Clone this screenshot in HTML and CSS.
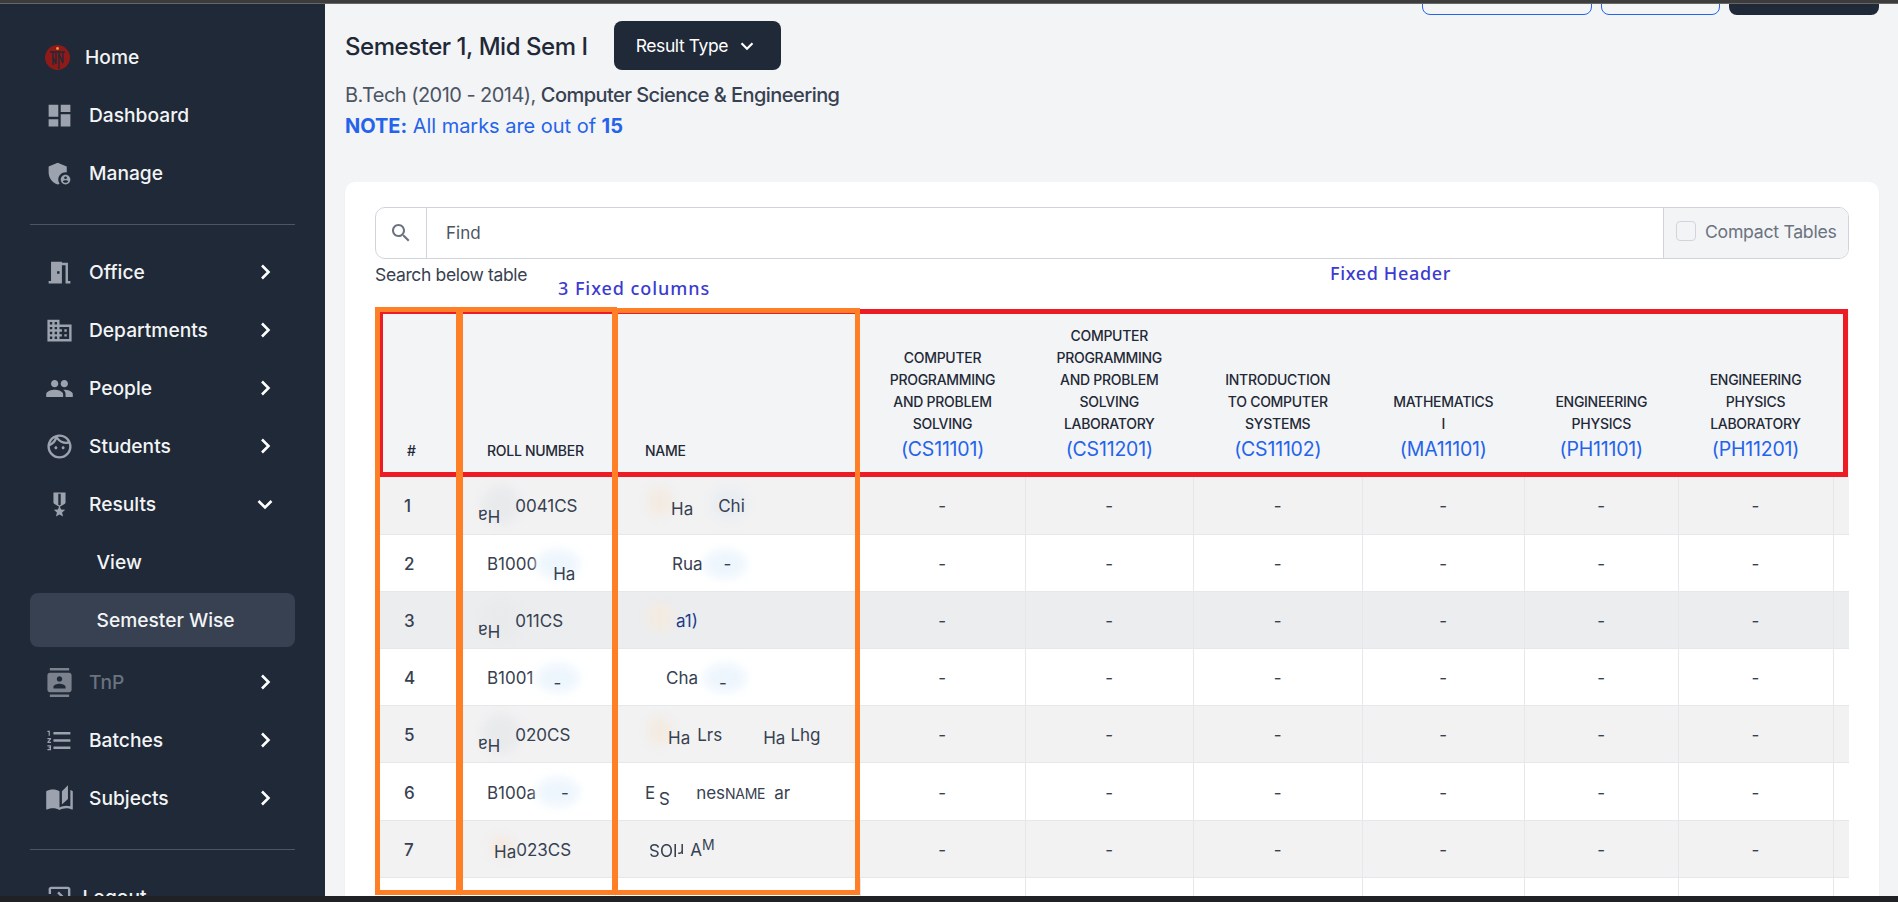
FILE: index.html
```html
<!DOCTYPE html>
<html lang="en">
<head>
<meta charset="utf-8">
<title>Semester Wise Results</title>
<link rel="stylesheet" href="styles.css">
</head>
<body>
<div class="topbar"></div>
<div class="app">
  <aside class="sidebar">
    <a class="nav nav-home">
      <svg class="logo" viewBox="0 0 25 25"><circle cx="12.5" cy="12.5" r="12.5" fill="#8f1a1a"/><circle cx="12.5" cy="3.5" r="1.4" fill="#f0a030"/><path d="M5 7h15M8 7v13M8 12l3 7V8M14 7v17M14 9l4 9V7" fill="none" stroke="#1f2937" stroke-width="1.3"/></svg>
      <span>Home</span>
    </a>
    <a class="nav"><svg class="ico" viewBox="0 0 24 24"><path d="M3 13h8V3H3v10zm0 8h8v-6H3v6zm10 0h8V11h-8v10zm0-18v6h8V3h-8z"/></svg><span>Dashboard</span></a>
    <a class="nav"><svg class="ico" viewBox="0 0 24 24"><path d="M17 11c.34 0 .67.04 1 .09V6.27L10.5 3 3 6.27v4.91c0 4.54 3.2 8.79 7.5 9.82.55-.13 1.08-.32 1.6-.55-.69-.98-1.1-2.17-1.1-3.45 0-3.31 2.69-6 6-6z"/><path d="M17 13c-2.21 0-4 1.79-4 4s1.79 4 4 4 4-1.79 4-4-1.79-4-4-4zm0 1.38c.62 0 1.12.51 1.12 1.12s-.51 1.12-1.12 1.12-1.12-.51-1.12-1.12.5-1.12 1.12-1.12zm0 5.37c-.93 0-1.74-.46-2.24-1.17.05-.72 1.51-1.08 2.24-1.08s2.19.36 2.24 1.08c-.5.71-1.31 1.17-2.24 1.17z"/></svg><span>Manage</span></a>
    <hr class="rule">
    <a class="nav"><svg class="ico" viewBox="0 0 24 24"><path d="M14 6v15H3v-2h2V3h9v1h5v15h2v2h-4V6h-3zm-4 5v2h2v-2h-2z"/></svg><span>Office</span><svg class="chev" viewBox="0 0 24 24"><path d="M9 5.5l6.5 6.5L9 18.5"/></svg></a>
    <a class="nav"><svg class="ico" viewBox="0 0 24 24"><path d="M12 7V3H2v18h20V7H12zM6 19H4v-2h2v2zm0-4H4v-2h2v2zm0-4H4V9h2v2zm0-4H4V5h2v2zm4 12H8v-2h2v2zm0-4H8v-2h2v2zm0-4H8V9h2v2zm0-4H8V5h2v2zm10 12h-8v-2h2v-2h-2v-2h2v-2h-2V9h8v10zm-2-8h-2v2h2v-2zm0 4h-2v2h2v-2z"/></svg><span>Departments</span><svg class="chev" viewBox="0 0 24 24"><path d="M9 5.5l6.5 6.5L9 18.5"/></svg></a>
    <a class="nav"><svg class="ico" viewBox="0 0 24 24"><path d="M16 11c1.66 0 2.99-1.34 2.99-3S17.66 5 16 5c-1.66 0-3 1.34-3 3s1.34 3 3 3zm-8 0c1.66 0 2.99-1.34 2.99-3S9.66 5 8 5C6.34 5 5 6.34 5 8s1.34 3 3 3zm0 2c-2.33 0-7 1.17-7 3.5V19h14v-2.5c0-2.33-4.67-3.5-7-3.5zm8 0c-.29 0-.62.02-.97.05 1.16.84 1.97 1.97 1.97 3.45V19h6v-2.5c0-2.33-4.67-3.5-7-3.5z"/></svg><span>People</span><svg class="chev" viewBox="0 0 24 24"><path d="M9 5.5l6.5 6.5L9 18.5"/></svg></a>
    <a class="nav"><svg class="ico" viewBox="0 0 24 24"><path d="M10.25 13c0 .69-.56 1.25-1.25 1.25S7.75 13.69 7.75 13s.56-1.25 1.25-1.25 1.25.56 1.25 1.25zM15 11.75c-.69 0-1.25.56-1.25 1.25s.56 1.25 1.25 1.25 1.25-.56 1.25-1.25-.56-1.25-1.25-1.25zm7 .25c0 5.52-4.48 10-10 10S2 17.52 2 12 6.48 2 12 2s10 4.48 10 10zM10.66 4.12C12.06 6.44 14.6 8 17.5 8c.46 0 .91-.05 1.34-.12C17.44 5.56 14.9 4 12 4c-.46 0-.91.05-1.34.12zM4.42 9.47c1.71-.97 3.03-2.55 3.66-4.44C6.37 6 5.05 7.58 4.42 9.47zM20 12c0-.78-.12-1.53-.33-2.24-.7.15-1.42.24-2.17.24-3.13 0-5.92-1.44-7.76-3.69C8.69 8.87 6.6 10.88 4 11.86c.01.04 0 .09 0 .14 0 4.41 3.59 8 8 8s8-3.59 8-8z"/></svg><span>Students</span><svg class="chev" viewBox="0 0 24 24"><path d="M9 5.5l6.5 6.5L9 18.5"/></svg></a>
    <a class="nav"><svg class="ico" viewBox="0 0 24 24"><path d="M17 10.43V2H7v8.43c0 .35.18.68.49.86l4.18 2.51-.99 2.34-3.41.29 2.59 2.24L9.07 22 12 20.23 14.93 22l-.78-3.33 2.59-2.24-3.41-.29-.99-2.34 4.18-2.51c.3-.18.48-.5.48-.86zm-4 1.8-1 .6-1-.6V3h2v9.23z"/></svg><span>Results</span><svg class="chev" viewBox="0 0 24 24"><path d="M5.5 9l6.5 6.5L18.5 9"/></svg></a>
    <div class="sublist">
      <a class="nav nav-sub"><span>View</span></a>
      <a class="nav nav-sub nav-active"><span>Semester Wise</span></a>
    </div>
    <a class="nav nav-off"><svg class="ico" viewBox="0 0 24 24"><path d="M20 0H4v2h16V0zM4 24h16v-2H4v2zM20 4H4c-1.1 0-2 .9-2 2v12c0 1.1.9 2 2 2h16c1.1 0 2-.9 2-2V6c0-1.1-.9-2-2-2zm-8 2.75c1.24 0 2.25 1.01 2.25 2.25s-1.01 2.25-2.25 2.25S9.75 10.24 9.75 9 10.76 6.75 12 6.75zM17 17H7v-1.5c0-1.67 3.33-2.5 5-2.5s5 .83 5 2.5V17z"/></svg><span>TnP</span><svg class="chev" viewBox="0 0 24 24"><path d="M9 5.5l6.5 6.5L9 18.5"/></svg></a>
    <a class="nav"><svg class="ico" viewBox="0 0 24 24"><path d="M2 17h2v.5H3v1h1v.5H2v1h3v-4H2v1zm1-9h1V4H2v1h1v3zm-1 3h1.8L2 13.1v.9h3v-1H3.2L5 10.9V10H2v1zm5-6v2h14V5H7zm0 14h14v-2H7v2zm0-6h14v-2H7v2z"/></svg><span>Batches</span><svg class="chev" viewBox="0 0 24 24"><path d="M9 5.5l6.5 6.5L9 18.5"/></svg></a>
    <a class="nav"><svg class="ico" viewBox="0 0 24 24"><path d="M19 1l-5 5v11l5-4.5V1zM1 6v14.65c0 .25.25.5.5.5.1 0 .15-.05.25-.05C3.1 20.45 5.05 20 6.5 20c1.95 0 4.05.4 5.5 1.5V6c-1.45-1.1-3.55-1.5-5.5-1.5S2.45 4.9 1 6zm22 13.5V6c-.6-.45-1.25-.8-2-1.05v13.5c-1.1-.35-2.3-.5-3.5-.5-1.7 0-4.15.65-5.5 1.5v2.05c1.35-.85 3.8-1.5 5.5-1.5 1.65 0 3.35.3 4.75 1.05.1.05.15.05.25.05.25 0 .5-.25.5-.5v-1.1z"/></svg><span>Subjects</span><svg class="chev" viewBox="0 0 24 24"><path d="M9 5.5l6.5 6.5L9 18.5"/></svg></a>
    <hr class="rule">
    <a class="nav nav-logout"><svg class="ico" viewBox="0 0 24 24"><path d="M10.09 15.59L11.5 17l5-5-5-5-1.41 1.41L12.67 11H3v2h9.67l-2.58 2.59zM19 3H5c-1.11 0-2 .9-2 2v4h2V5h14v14H5v-4H3v4c0 1.1.89 2 2 2h14c1.1 0 2-.9 2-2V5c0-1.1-.9-2-2-2z"/></svg><span>Logout</span></a>
  </aside>

  <main class="main">
    <div class="toolbar">
      <button class="btn-outline btn-wide"></button>
      <button class="btn-outline btn-mid"></button>
      <button class="btn-dark-cut"></button>
    </div>
    <div class="title-row">
      <h1 class="title">Semester 1, Mid Sem I</h1>
      <button class="btn-type">Result Type<svg viewBox="0 0 24 24"><path d="M6 9l6 6 6-6"/></svg></button>
    </div>
    <p class="subline">B.Tech (2010 - 2014), <b>Computer Science &amp; Engineering</b></p>
    <p class="note"><b>NOTE:</b> All marks are out of <b>15</b></p>

    <section class="card">
      <div class="search">
        <div class="search-ico"><svg viewBox="0 0 24 24"><path d="M15.5 14h-.79l-.28-.27C15.41 12.59 16 11.11 16 9.5 16 5.91 13.09 3 9.5 3S3 5.91 3 9.5 5.91 16 9.5 16c1.61 0 3.09-.59 4.23-1.57l.27.28v.79l5 4.99L20.49 19l-4.99-5zm-6 0C7.01 14 5 11.99 5 9.5S7.01 5 9.5 5 14 7.01 14 9.5 11.99 14 9.5 14z"/></svg></div>
        <div class="search-input">Find</div>
        <label class="compact"><i class="check"></i>Compact Tables</label>
      </div>
      <div class="hint">Search below table</div>

      <div class="table-wrap">
        <table class="grid">
          <colgroup><col class="c-num"><col class="c-roll"><col class="c-name"><col class="c-a"><col class="c-b"><col class="c-c"><col class="c-d"><col class="c-e"><col class="c-f"><col class="c-g"></colgroup>
          <thead>
            <tr>
              <th class="t-num">#</th><th class="t-left">ROLL NUMBER</th><th class="t-left t-name">NAME</th>
              <th>COMPUTER<br>PROGRAMMING<br>AND PROBLEM<br>SOLVING<a>(CS11101)</a></th>
              <th>COMPUTER<br>PROGRAMMING<br>AND PROBLEM<br>SOLVING<br>LABORATORY<a>(CS11201)</a></th>
              <th>INTRODUCTION<br>TO COMPUTER<br>SYSTEMS<a>(CS11102)</a></th>
              <th>MATHEMATICS<br>I<a>(MA11101)</a></th>
              <th>ENGINEERING<br>PHYSICS<a>(PH11101)</a></th>
              <th>ENGINEERING<br>PHYSICS<br>LABORATORY<a>(PH11201)</a></th>
              <th></th>
            </tr>
          </thead>
          <tbody>
            <tr class="odd">
              <td class="num">1</td>
              <td class="txt"><i class="sm sm-grey"></i><span class="flip g-n9 dn">Ha</span><span class="g15">0041CS</span></td>
              <td class="txt nm"><i class="sm sm-tan"></i><i class="sm sm-haze"></i><span class="g26 dn3">Ha</span><span class="g25">Chi</span></td>
              <td>-</td><td>-</td><td>-</td><td>-</td><td>-</td><td>-</td><td></td>
            </tr>
            <tr>
              <td class="num">2</td>
              <td class="txt"><i class="sm sm-blue"></i>B1000<span class="g16 dn">Ha</span></td>
              <td class="txt nm"><i class="sm sm-blue sm-name"></i><span class="g27">Rua</span><span class="g21">-</span></td>
              <td>-</td><td>-</td><td>-</td><td>-</td><td>-</td><td>-</td><td></td>
            </tr>
            <tr class="odd deep">
              <td class="num">3</td>
              <td class="txt"><i class="sm sm-grey"></i><span class="flip g-n9 dn">Ha</span><span class="g15">011CS</span></td>
              <td class="txt nm"><i class="sm sm-tan"></i><span class="g31 ink">a1)</span></td>
              <td>-</td><td>-</td><td>-</td><td>-</td><td>-</td><td>-</td><td></td>
            </tr>
            <tr>
              <td class="num">4</td>
              <td class="txt"><i class="sm sm-blue"></i>B1001<span class="g20 dn-s">-</span></td>
              <td class="txt nm"><i class="sm sm-blue sm-name"></i><span class="g21">Cha</span><span class="g21 dn-s">-</span></td>
              <td>-</td><td>-</td><td>-</td><td>-</td><td>-</td><td>-</td><td></td>
            </tr>
            <tr class="odd">
              <td class="num">5</td>
              <td class="txt"><i class="sm sm-grey"></i><span class="flip g-n9 dn">Ha</span><span class="g15">020CS</span></td>
              <td class="txt nm"><i class="sm sm-tan"></i><span class="g23 dn3">Ha</span><span class="g7">Lrs</span><span class="g41 dn3">Ha</span><span class="g5">Lhg</span></td>
              <td>-</td><td>-</td><td>-</td><td>-</td><td>-</td><td>-</td><td></td>
            </tr>
            <tr>
              <td class="num">6</td>
              <td class="txt"><i class="sm sm-blue"></i>B100a<span class="g25">-</span></td>
              <td class="txt nm">E<span class="flip dn-s small-gap">S</span><span class="g26">nes</span><span class="tiny">NAME</span><span class="g9">ar</span></td>
              <td>-</td><td>-</td><td>-</td><td>-</td><td>-</td><td>-</td><td></td>
            </tr>
            <tr class="odd">
              <td class="num">7</td>
              <td class="txt"><i class="sm sm-tan sm-late"></i><span class="g7 dn2">Ha</span>023CS</td>
              <td class="txt nm"><span class="flip g4">rIOS</span><span class="g6">A</span><span class="tiny up">M</span></td>
              <td>-</td><td>-</td><td>-</td><td>-</td><td>-</td><td>-</td><td></td>
            </tr>
            <tr>
              <td></td><td></td><td></td><td></td><td></td><td></td><td></td><td></td><td></td><td></td>
            </tr>
          </tbody>
        </table>
      </div>
    </section>
  </main>
</div>
<div class="bottombar"></div>

<div class="mark mark-orange mark-col1"></div>
<div class="mark mark-orange mark-col2"></div>
<div class="mark mark-orange mark-col3"></div>
<div class="mark mark-red"></div>
<div class="mark-label label-cols">3 Fixed columns</div>
<div class="mark-label label-head">Fixed Header</div>
</body>
</html>
```

FILE: styles.css
```css
* { box-sizing: border-box; }
html, body { margin: 0; height: 100%; }
body {
  width: 1898px;
  height: 902px;
  overflow: hidden;
  display: flex;
  flex-direction: column;
  position: relative;
  background: #f3f4f6;
  font-family: Inter, "Liberation Sans", sans-serif;
  color: #374151;
}
.topbar { height: 4px; flex: none; background: #3c3c3c; border-bottom: 1px solid #666; }
.bottombar { height: 6px; flex: none; background: #1f2124; }
.app { flex: 1; min-height: 0; display: flex; overflow: hidden; }

/* sidebar */
.sidebar {
  width: 325px;
  flex: none;
  padding-top: 26px;
  background: #1f2937;
  overflow: hidden;
}
.nav {
  height: 54px;
  margin: 0 30px 4px;
  padding-left: 14.5px;
  display: flex;
  align-items: center;
  gap: 15.5px;
  border-radius: 8px;
  color: #f3f4f6;
  font-size: 19.2px;
  font-weight: 500;
}
.ico { width: 29px; height: 29px; flex: none; fill: #9ca3af; }
.chev {
  width: 24px;
  height: 24px;
  flex: none;
  margin-left: auto;
  margin-right: 18px;
  fill: none;
  stroke: #fff;
  stroke-width: 2.6;
}
.logo { width: 25px; height: 25px; flex: none; }
.nav-home { padding-left: 15px; gap: 15px; }
.rule { height: 1px; margin: 24px 30px 20px; border: 0; background: #4b5563; }
.sublist { margin-bottom: 8px; }
.nav-sub { padding-left: 66.5px; }
.nav-active { margin-bottom: 0; background: #374151; }
.nav-off { color: #6b7280; }
.nav-off .ico { fill: #7b828e; }
.nav-logout { gap: 9px; color: #f3f4f6; }

/* main */
.main {
  flex: 1;
  min-width: 0;
  padding: 0 19px 0 20px;
  overflow: hidden;
}
.toolbar {
  height: 11px;
  display: flex;
  justify-content: flex-end;
  align-items: flex-end;
  gap: 9px;
  overflow: hidden;
}
.toolbar button { height: 40px; flex: none; padding: 0; border-radius: 8px; }
.btn-outline { border: 1px solid #2563eb; background: transparent; }
.btn-wide { width: 170px; }
.btn-mid { width: 119px; }
.btn-dark-cut { width: 150px; border: 0; background: #1f2937; }
.title-row { height: 49px; margin-top: 6px; display: flex; align-items: center; gap: 26px; }
.title {
  margin: 3px 0 0;
  font-size: 24px;
  line-height: 32px;
  font-weight: 500;
  letter-spacing: -0.45px;
  color: #1f2937;
}
.btn-type {
  width: 167px;
  height: 49px;
  flex: none;
  padding: 0 0 0 22px;
  display: flex;
  align-items: center;
  gap: 8px;
  border: 0;
  border-radius: 8px;
  background: #1f2937;
  color: #fff;
  font: 400 17.5px Inter, sans-serif;
  letter-spacing: -0.4px;
}
.btn-type svg { width: 22px; height: 22px; fill: none; stroke: #fff; stroke-width: 2.4; }
.subline {
  margin: 11px 0 0;
  font-size: 20px;
  line-height: 28px;
  color: #4b5563;
  letter-spacing: -0.55px;
}
.subline b { font-weight: 500; color: #374151; }
.note {
  margin: 3px 0 0;
  font-size: 20px;
  line-height: 28px;
  color: #2563eb;
  font-weight: 400;
  letter-spacing: -0.03px;
}
.note b { font-weight: 700; }

/* card */
.card {
  margin-top: 42px;
  height: 740px;
  padding: 25px 30px 0;
  border-radius: 10px;
  background: #fff;
  box-shadow: 0 1px 2px rgba(0, 0, 0, .06);
}
.search {
  height: 52px;
  display: flex;
  border: 1px solid #d1d5db;
  border-radius: 10px;
  overflow: hidden;
}
.search-ico {
  width: 51px;
  flex: none;
  display: flex;
  align-items: center;
  justify-content: center;
  border-right: 1px solid #d1d5db;
}
.search-ico svg { width: 24px; height: 24px; fill: #6b7280; }
.search-input {
  flex: 1;
  padding-left: 19px;
  display: flex;
  align-items: center;
  font-size: 17px;
  color: #4b5563;
}
.compact {
  width: 185px;
  flex: none;
  padding: 0 0 4px 12px;
  display: flex;
  align-items: center;
  gap: 9px;
  border-left: 1px solid #d1d5db;
  background: #f3f4f6;
  color: #6b7280;
  font-size: 17.7px;
  letter-spacing: -0.3px;
}
.check { width: 20px; height: 20px; border: 1px solid #d1d5db; border-radius: 4px; background: #f3f4f6; }
.hint {
  height: 26px;
  margin-top: 3px;
  font-size: 17.5px;
  line-height: 26px;
  letter-spacing: -0.35px;
  color: #374151;
}
.table-wrap { margin-top: 21px; width: 1474px; overflow: hidden; }

/* table */
.grid {
  width: 1674px;
  table-layout: fixed;
  border-collapse: collapse;
}
.c-num { width: 85px; }
.c-roll { width: 155px; }
.c-name { width: 245px; }
.c-a { width: 165px; }
.c-b { width: 168.5px; }
.c-c { width: 168.5px; }
.c-d { width: 162.5px; }
.c-e { width: 153.5px; }
.c-f { width: 155px; }
.c-g { width: 216px; }
.grid th {
  padding: 0 0 14px;
  height: 168px;
  vertical-align: bottom;
  background: #f3f4f6;
  font-size: 14px;
  line-height: 22px;
  font-weight: 500;
  letter-spacing: -0.28px;
  color: #1f2937;
  text-align: center;
}
.grid th a {
  display: block;
  font-size: 19.5px;
  line-height: 28px;
  font-weight: 400;
  letter-spacing: -0.2px;
  color: #2563eb;
}
.grid th.t-left { text-align: left; padding: 0 0 15px 27px; }
.grid th.t-name { padding-left: 30px; }
.grid th.t-num { text-align: left; padding: 0 0 15px 32px; }
.grid td {
  height: 57.2px;
  padding: 2px 0 0;
  border-right: 1px solid #e5e7eb;
  border-bottom: 1px solid #e5e7eb;
  font-size: 17px;
  text-align: center;
  color: #374151;
}
.grid tr.odd td { background: #f2f2f3; }
.grid tr.deep td { background: #ecedef; }
.grid td.num { padding-left: 29px; text-align: left; font-weight: 500; border-right: 0; }
.grid td.txt { position: relative; padding-left: 27px; text-align: left; white-space: nowrap; border-right: 0; }
.grid td.nm { padding-left: 30px; }
.grid td.txt span { display: inline-block; position: relative; }

/* scrambled, smudged fragments of the redacted names */
.sm { position: absolute; display: block; border-radius: 50%; filter: blur(5px); }
.sm-grey { left: 22px; top: 8px; width: 38px; height: 40px; background: #e9eaec; }
.sm-blue { left: 76px; top: 14px; width: 44px; height: 30px; background: #eef6fd; }
.sm-tan { left: 32px; top: 10px; width: 26px; height: 30px; background: #f3ebe2; }
.sm-haze { left: 96px; top: 10px; width: 36px; height: 34px; background: #e9edf1; }
.sm-name { left: 88px; }
.sm-late { left: 30px; top: 14px; width: 24px; height: 24px; }
.flip { transform: rotate(180deg); }
.dn { transform: translateY(10px); }
.dn2 { transform: translateY(2px); }
.dn3 { transform: translateY(3px); }
.flip.dn { transform: translateY(10px) rotate(180deg); }
.dn-s { transform: translateY(5px); }
.up { transform: translateY(-6px); }
.flip.dn-s { transform: translateY(5px) rotate(180deg); }
.ink { color: #1e3a8a; }
.tiny { font-size: 14px; letter-spacing: -0.3px; }
.small-gap { margin-left: 4px; }
.g-n9 { margin-left: -9px; }
.g4 { margin-left: 4px; }
.g5 { margin-left: 5px; }
.g6 { margin-left: 6px; }
.g7 { margin-left: 7px; }
.g9 { margin-left: 9px; }
.g15 { margin-left: 15px; }
.g16 { margin-left: 16px; }
.g20 { margin-left: 20px; }
.g21 { margin-left: 21px; }
.g23 { margin-left: 23px; }
.g25 { margin-left: 25px; }
.g26 { margin-left: 26px; }
.g27 { margin-left: 27px; }
.g31 { margin-left: 31px; }
.g41 { margin-left: 41px; }

/* annotations painted over the screenshot */
.mark { position: absolute; pointer-events: none; }
.mark-red { left: 378px; top: 309px; width: 1470px; height: 168px; border: 5px solid #ed1c24; }
.mark-orange { top: 307px; height: 588px; border: 5px solid #ff7f27; z-index: 1; }
.mark-col1 { left: 375px; width: 86px; }
.mark-col2 { left: 458px; width: 159px; }
.mark-col3 { left: 613px; width: 247px; top: 308px; height: 587px; }
.mark-label {
  position: absolute;
  font-family: "Noto Sans", sans-serif;
  font-size: 18px;
  line-height: 20px;
  font-weight: 500;
  letter-spacing: .65px;
  color: #3b3bd0;
}
.label-cols { left: 558px; top: 278px; letter-spacing: .95px; }
.label-head { left: 1330px; top: 263px; }
```
